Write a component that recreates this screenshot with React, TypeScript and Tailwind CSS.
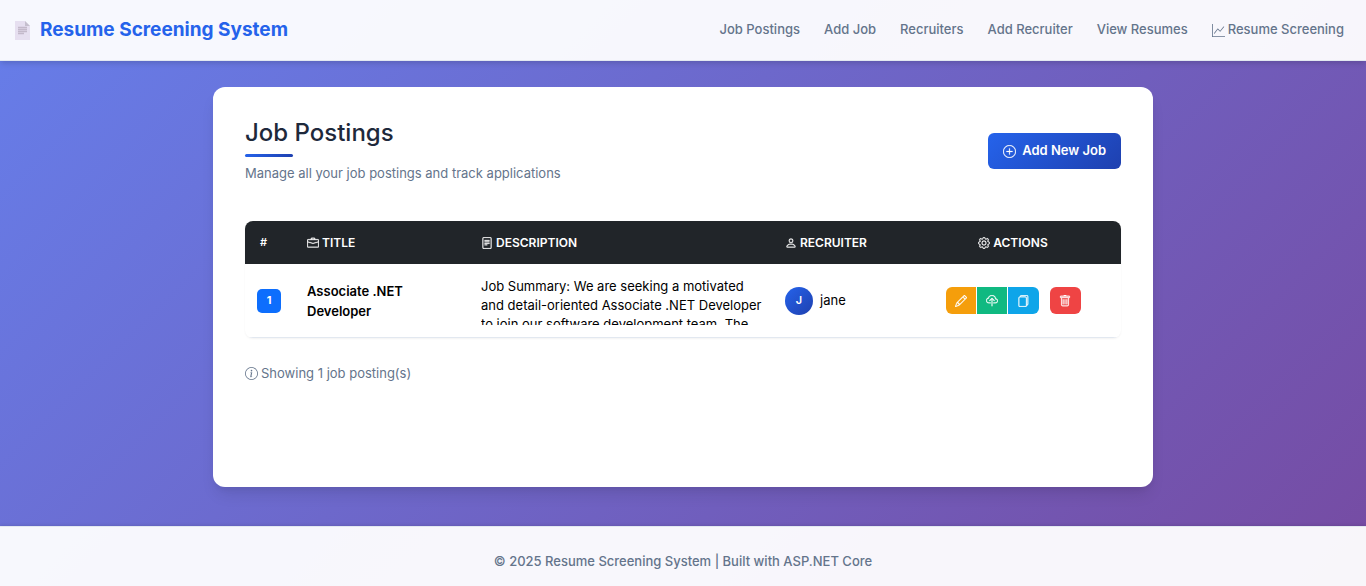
import {
  BsBriefcase,
  BsCloudUpload,
  BsFileText,
  BsFiles,
  BsGear,
  BsGraphUp,
  BsInfoCircle,
  BsPencil,
  BsPerson,
  BsPlusCircle,
  BsTrash,
} from "react-icons/bs";

const links = ["Job Postings", "Add Job", "Recruiters", "Add Recruiter", "View Resumes"];

const jobs = [
  {
    id: 1,
    title: "Associate .NET Developer",
    description:
      "Job Summary: We are seeking a motivated and detail-oriented Associate .NET Developer to join our software development team. The",
    recruiter: "jane",
  },
];

function PageIcon() {
  return (
    <svg viewBox="0 0 15 19" className="h-[19px] w-[15px]" aria-hidden="true">
      <path d="M0 0h10l5 5v14H0z" fill="#e6dff0" />
      <path d="M10 0l5 5h-5z" fill="#c5bfce" />
      <path d="M3 6.5h9M3 8.5h9M3 10.5h9M3 12.5h6" stroke="#c3b9ca" strokeWidth="1.3" />
    </svg>
  );
}

export default function App() {
  return (
    <div className="flex min-h-screen flex-col bg-[linear-gradient(135deg,#667eea_0%,#764ba2_100%)] font-['Inter','Liberation_Sans',sans-serif] text-[13px] text-black">
      <header className="flex h-[61px] items-center justify-between border-b border-[#e2e8f0] bg-white/95 pr-[22px] pl-[15px] shadow-[0_4px_6px_-1px_rgba(0,0,0,0.1),0_2px_4px_-1px_rgba(0,0,0,0.06)]">
        <a href="#" className="flex items-center gap-[10px] text-[19px] font-bold text-[#2563eb]">
          <PageIcon />
          Resume Screening System
        </a>
        <nav className="flex items-center gap-6 font-medium text-[#64748b]">
          {links.map((label) => (
            <a key={label} href="#">
              {label}
            </a>
          ))}
          <a href="#" className="flex items-center gap-[3px]">
            <BsGraphUp className="size-[13px]" />
            Resume Screening
          </a>
        </nav>
      </header>

      <main className="flex grow flex-col px-6 pt-[26px] pb-[39px]">
        <section className="mx-auto min-h-[400px] w-full max-w-[940px] rounded-xl bg-white p-8 shadow-[0_10px_15px_-3px_rgba(0,0,0,0.1),0_4px_6px_-2px_rgba(0,0,0,0.05)]">
          <div className="flex items-center justify-between pb-[38px]">
            <div>
              <h1 className="text-[24px] leading-[28px] font-medium text-[#1e293b]">Job Postings</h1>
              <div className="mt-[7px] h-[3px] w-12 rounded-sm bg-[linear-gradient(135deg,#2563eb,#1e40af)]" />
              <p className="mt-[6px] leading-5 text-[#64748b]">Manage all your job postings and track applications</p>
            </div>
            <button
              type="button"
              className="flex h-9 items-center gap-[6px] rounded-md bg-[linear-gradient(135deg,#2563eb,#1e40af)] px-[15px] font-semibold text-white"
            >
              <BsPlusCircle className="size-[13px] stroke-[0.3]" />
              Add New Job
            </button>
          </div>

          <div className="overflow-hidden rounded-lg shadow-[0_1px_2px_rgba(0,0,0,0.05)]">
            <table className="w-full table-fixed border-collapse text-left">
              <thead className="bg-[#212529] text-[12px] leading-[19px] text-white uppercase">
                <tr>
                  <th className="w-[50px] py-3 pl-[15px] text-[11px] font-semibold">#</th>
                  <th className="w-[174px] p-3 font-semibold">
                    <span className="flex items-center gap-[3px]">
                      <BsBriefcase className="size-[12px] stroke-[0.4]" />
                      Title
                    </span>
                  </th>
                  <th className="p-3 font-semibold">
                    <span className="flex items-center gap-[3px]">
                      <BsFileText className="size-[12px] stroke-[0.4]" />
                      Description
                    </span>
                  </th>
                  <th className="w-[132px] p-3 font-semibold">
                    <span className="flex items-center gap-[3px]">
                      <BsPerson className="size-[12px] stroke-[0.4]" />
                      Recruiter
                    </span>
                  </th>
                  <th className="w-[216px] p-3 font-semibold">
                    <span className="flex items-center justify-center gap-[3px]">
                      <BsGear className="size-[12px] stroke-[0.4]" />
                      Actions
                    </span>
                  </th>
                </tr>
              </thead>
              <tbody>
                {jobs.map((job) => (
                  <tr key={job.id} className="border-b border-[#e2e8f0]">
                    <td className="p-3">
                      <span className="flex size-6 items-center justify-center rounded-[5px] bg-[#0d6efd] text-[11px] font-bold text-white">
                        {job.id}
                      </span>
                    </td>
                    <td className="p-3 leading-5 font-semibold">{job.title}</td>
                    <td className="py-3 pr-2 pl-3">
                      <div className="h-[49px] overflow-hidden pt-px leading-[19px]">{job.description}</div>
                    </td>
                    <td className="p-3">
                      <div className="flex items-center gap-[7px]">
                        <span className="flex size-7 items-center justify-center rounded-full bg-[linear-gradient(135deg,#2563eb,#1e40af)] text-[11px] font-semibold text-white uppercase">
                          {job.recruiter[0]}
                        </span>
                        {job.recruiter}
                      </div>
                    </td>
                    <td className="p-3">
                      <div className="flex items-center justify-center gap-[11px] text-white">
                        <div className="flex gap-px">
                          <button type="button" aria-label="Edit" className="flex h-[27px] w-[30px] items-center justify-center rounded-l-md bg-[#f59e0b]">
                            <BsPencil className="size-[12px] stroke-[0.4]" />
                          </button>
                          <button type="button" aria-label="Upload resume" className="flex h-[27px] w-[30px] items-center justify-center bg-[#10b981]">
                            <BsCloudUpload className="size-[12px] stroke-[0.4]" />
                          </button>
                          <button type="button" aria-label="View resumes" className="flex h-[27px] w-[31px] items-center justify-center rounded-r-md bg-[#0ea5e9]">
                            <BsFiles className="size-[12px] stroke-[0.4]" />
                          </button>
                        </div>
                        <button type="button" aria-label="Delete" className="flex h-[27px] w-[31px] items-center justify-center rounded-md bg-[#ef4444]">
                          <BsTrash className="size-[12px] stroke-[0.4]" />
                        </button>
                      </div>
                    </td>
                  </tr>
                ))}
              </tbody>
            </table>
          </div>

          <p className="mt-[25px] flex items-center gap-[3px] leading-5 text-[#64748b]">
            <BsInfoCircle className="size-[13px]" />
            Showing {jobs.length} job posting(s)
          </p>
        </section>
      </main>

      <footer className="border-t border-[#e2e8f0] bg-white/95 pt-6 pb-[15px] text-center leading-5 font-medium text-[#64748b] shadow-[0_-1px_3px_rgba(0,0,0,0.1)]">
        © 2025 Resume Screening System | Built with ASP.NET Core
      </footer>
    </div>
  );
}
